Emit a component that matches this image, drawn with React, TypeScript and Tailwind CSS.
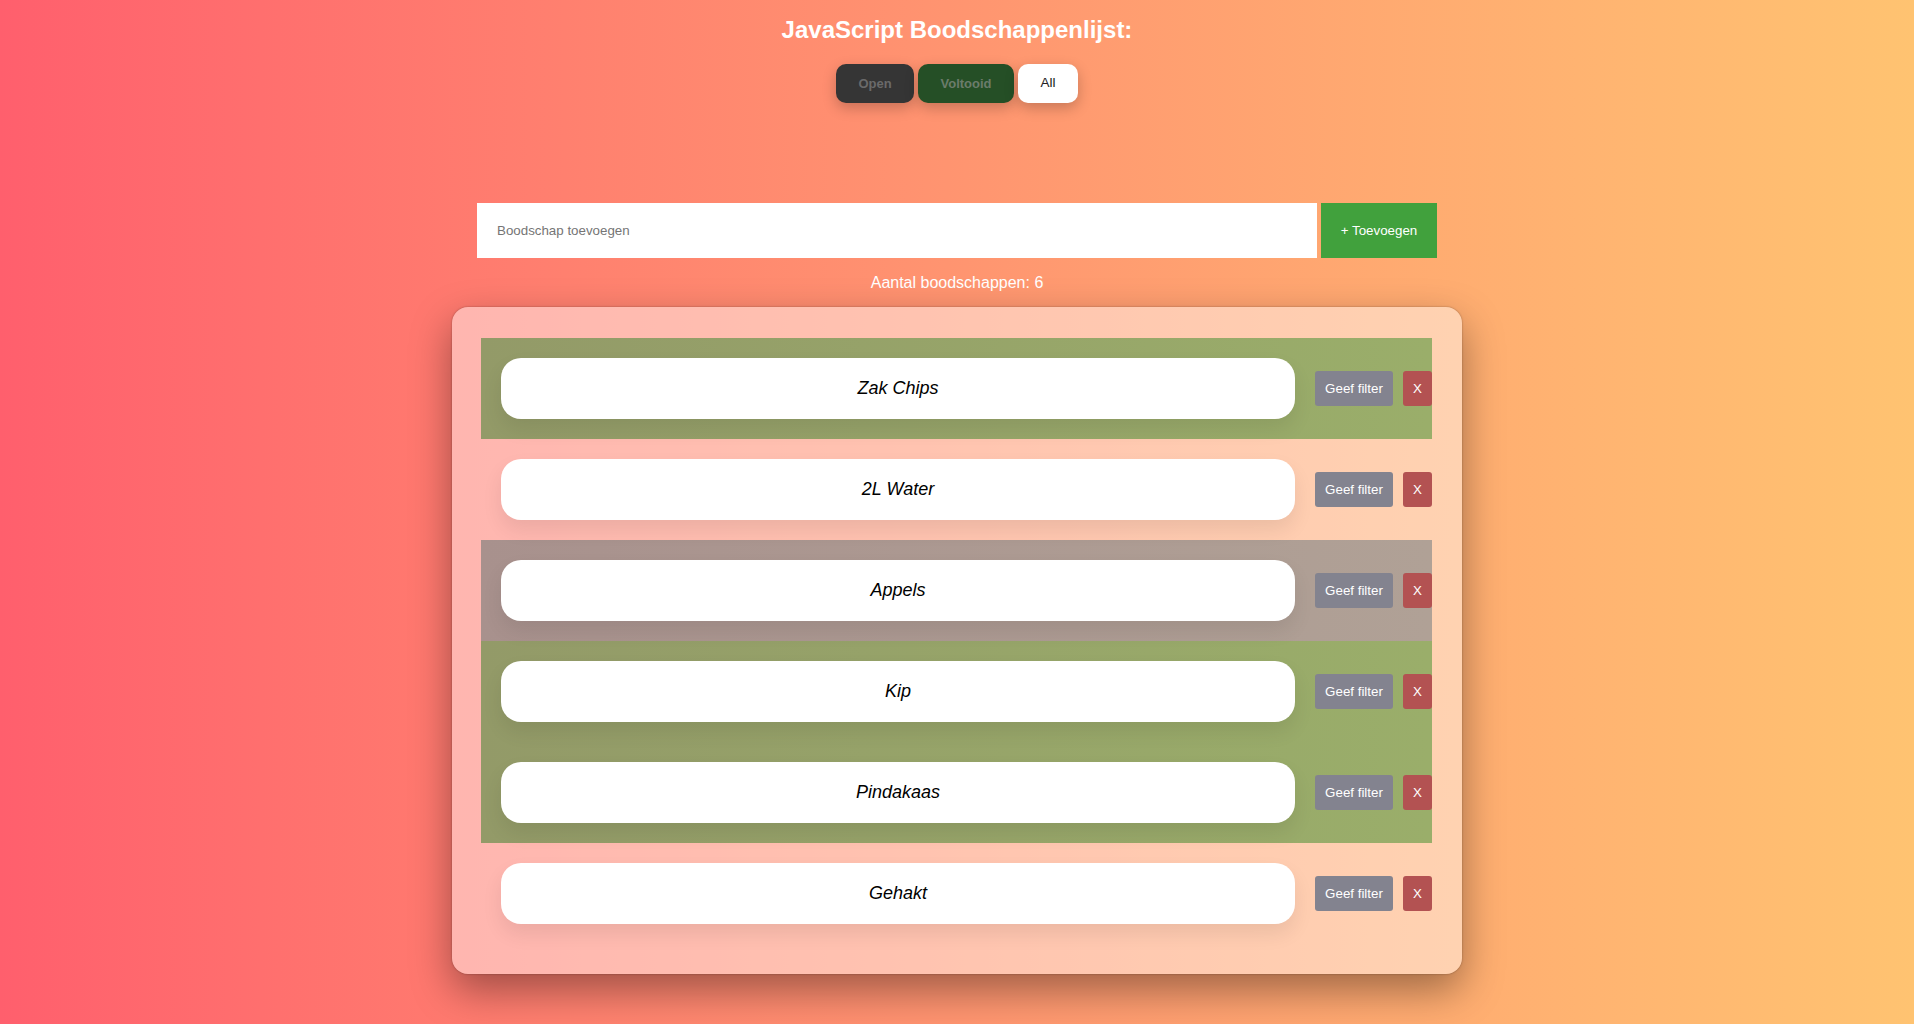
import React from "react";

type Item = { name: string; status: "done" | "open" | "none" };

const items: Item[] = [
  { name: "Zak Chips", status: "done" },
  { name: "2L Water", status: "none" },
  { name: "Appels", status: "open" },
  { name: "Kip", status: "done" },
  { name: "Pindakaas", status: "done" },
  { name: "Gehakt", status: "none" },
];

function Row({ item }: { item: Item }) {
  const bg =
    item.status === "done"
      ? "bg-gradient-to-r from-[#939a68] to-[#9aae6a]"
      : item.status === "open"
      ? "bg-gradient-to-r from-[#a8918d] to-[#b0a196]"
      : "";
  return (
    <div className={`flex h-[101px] items-center pl-5 ${bg}`}>
      <div className="flex h-[61px] flex-1 items-center justify-center rounded-[20px] bg-white shadow-[0_10px_20px_rgba(0,0,0,0.08)]">
        <span className="text-[18px] italic text-black">{item.name}</span>
      </div>
      <button className="ml-5 h-[35px] w-[78px] rounded-[3px] bg-[#83838f] text-[13.33px] text-white">
        Geef filter
      </button>
      <button className="ml-[10px] h-[35px] w-[29px] rounded-[3px] bg-[#b35252] text-[13.33px] text-white">
        X
      </button>
    </div>
  );
}

export default function App() {
  return (
    <div
      className="flex min-h-screen w-full flex-col items-center bg-gradient-to-r from-[#ff5f6d] to-[#ffc371] pb-[50px]"
      style={{ fontFamily: '"Liberation Sans", Arial, sans-serif' }}
    >
      <h1 className="mt-4 text-[24px] font-bold leading-[28px] text-white">
        JavaScript Boodschappenlijst:
      </h1>
      <div className="mt-5 flex gap-1">
        <button className="h-[39px] w-[78px] rounded-[10px] bg-[#353535] text-[13px] font-bold text-[#6a6a6a] shadow-[0_5px_14px_rgba(0,0,0,0.22)]">
          Open
        </button>
        <button className="h-[39px] w-[96px] rounded-[10px] bg-[#254f26] text-[13px] font-bold text-[#6b7c6b] shadow-[0_5px_14px_rgba(0,0,0,0.22)]">
          Voltooid
        </button>
        <button className="h-[39px] w-[60px] rounded-[10px] bg-white text-[13.5px] text-[#222] shadow-[0_5px_14px_rgba(0,0,0,0.22)]">
          All
        </button>
      </div>
      <div className="mt-[100px] flex gap-1">
        <input
          className="h-[55px] w-[840px] bg-white px-5 text-[13.33px] text-black outline-none placeholder:text-[#757575]"
          placeholder="Boodschap toevoegen"
        />
        <button className="h-[55px] w-[116px] bg-[#41a13d] text-[13.33px] text-white">
          + Toevoegen
        </button>
      </div>
      <p className="mt-4 text-[16px] leading-[18px] text-white">
        Aantal boodschappen: 6
      </p>
      <div className="mt-[15px] w-[1010px] rounded-[16px] bg-white/45 pb-[30px] pl-[29px] pr-[30px] pt-[31px] shadow-[0_0_2px_rgba(0,0,0,0.35),0_16px_40px_rgba(0,0,0,0.38)]">
        {items.map((it) => (
          <Row key={it.name} item={it} />
        ))}
      </div>
    </div>
  );
}
